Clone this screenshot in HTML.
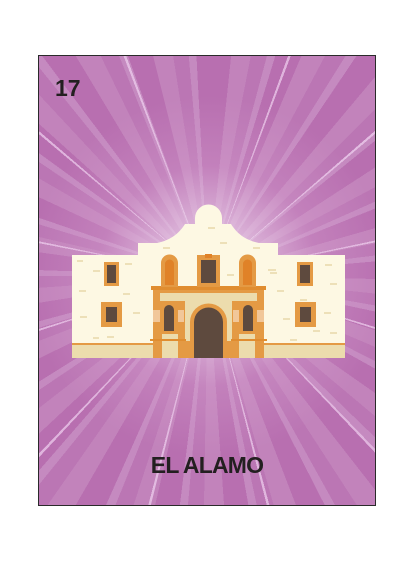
<!DOCTYPE html>
<html><head><style>
body{margin:0;width:414px;height:563px;background:#fff;position:relative;overflow:hidden;font-family:"Liberation Sans",sans-serif}
.card{position:absolute;left:38px;top:55px;width:336px;height:449px;border:1.5px solid #2a2a2a;overflow:hidden;
background:
radial-gradient(circle at 169px 220px, rgba(255,255,255,0.95) 0px, rgba(240,220,240,0.7) 40px, rgba(220,170,215,0.3) 110px, rgba(200,140,195,0) 180px),
repeating-conic-gradient(from 3deg at 169px 220px, rgba(255,255,255,0) 0deg 17deg, rgba(240,210,240,0.7) 17deg 17.6deg, rgba(255,255,255,0) 17.6deg 29deg),
repeating-conic-gradient(from 0deg at 169px 220px, #b86fb0 0deg 6deg, #c283bb 6deg 11deg, #bb76b4 11deg 15deg, #c58ac0 15deg 17deg);}
.t{position:absolute;font-weight:bold;color:#231f20}
</style></head><body>
<div class="card">
<div class="t" style="left:16px;top:19px;font-size:23px">17</div>
<div class="t" style="left:0;width:336px;text-align:center;top:396px;font-size:23px;letter-spacing:-0.8px">EL ALAMO</div>
</div>
<svg style="position:absolute;left:0;top:0" width="414" height="563">
<g>
<path d="M138 258 V243 H157 C172 240 180 232 185 224 H195 V218 A13 13 0 0 1 222 218 V224 H231 C236 232 244 240 259 243 H278 V258 Z" fill="#fdf8e3"/>
<rect x="72" y="255" width="273" height="103" fill="#fdf8e3"/>
<rect x="72" y="344" width="273" height="14" fill="#ecdcad"/>
<rect x="72" y="343" width="273" height="2" fill="#e49a44"/>
<g fill="#ede0b8">
<rect x="77" y="260" width="6" height="2"/><rect x="93" y="270" width="7" height="2"/><rect x="125" y="263" width="7" height="2"/>
<rect x="79" y="290" width="7" height="2"/><rect x="123" y="293" width="7" height="2"/><rect x="80" y="316" width="7" height="2"/>
<rect x="133" y="312" width="7" height="2"/><rect x="107" y="336" width="7" height="2"/><rect x="93" y="337" width="6" height="2"/>
<rect x="208" y="227" width="7" height="2"/><rect x="163" y="247" width="7" height="2"/><rect x="220" y="242" width="7" height="2"/>
<rect x="253" y="247" width="7" height="2"/><rect x="227" y="274" width="7" height="2"/><rect x="268" y="269" width="8" height="2"/>
<rect x="270" y="272" width="7" height="2"/><rect x="277" y="290" width="7" height="2"/><rect x="300" y="299" width="7" height="2"/>
<rect x="325" y="264" width="7" height="2"/><rect x="330" y="283" width="7" height="2"/><rect x="324" y="312" width="7" height="2"/>
<rect x="283" y="318" width="7" height="2"/><rect x="330" y="332" width="7" height="2"/><rect x="290" y="339" width="7" height="2"/><rect x="313" y="330" width="7" height="2"/>
</g>
<g fill="#e49a44"><rect x="104" y="262" width="15" height="24"/><rect x="101" y="302" width="21" height="25"/><rect x="297" y="262" width="16" height="24"/><rect x="295" y="302" width="21" height="25"/></g>
<g fill="#5e4a3e"><rect x="107" y="265" width="9" height="18"/><rect x="106" y="307" width="11" height="15"/><rect x="300" y="265" width="10" height="18"/><rect x="300" y="307" width="11" height="15"/></g>
<rect x="153" y="287" width="111" height="71" fill="#e49a44"/>
<rect x="151" y="286" width="115" height="4" fill="#e08d30"/>
<rect x="160" y="293" width="97" height="8" fill="#ecdcad"/>
<rect x="185" y="301" width="47" height="40" fill="#ecdcad"/>
<rect x="162" y="334" width="16" height="24" fill="#ecdcad"/>
<rect x="239" y="334" width="16" height="24" fill="#ecdcad"/>
<path d="M190 358 V322 A18 18 0 0 1 227 322 V358 Z" fill="#e49a44"/>
<path d="M194 358 V322 A14.5 14.5 0 0 1 223 322 V358 Z" fill="#5e4a3e"/>
<path d="M160 332 V310 A9 9 0 0 1 178 310 V332 Z" fill="#e49a44"/>
<path d="M164 331 V310 A5 5 0 0 1 174 310 V331 Z" fill="#5e4a3e"/>
<path d="M239 332 V310 A9 9 0 0 1 257 310 V332 Z" fill="#e49a44"/>
<path d="M243 331 V310 A5 5 0 0 1 253 310 V331 Z" fill="#5e4a3e"/>
<rect x="153" y="310" width="7" height="12" fill="#f1c79a"/><rect x="178" y="310" width="6" height="12" fill="#f1c79a"/>
<rect x="233" y="310" width="6" height="12" fill="#f1c79a"/><rect x="257" y="310" width="7" height="12" fill="#f1c79a"/>
<rect x="150" y="339" width="36" height="2" fill="#e08d30"/><rect x="231" y="339" width="36" height="2" fill="#e08d30"/>
<path d="M161 287 V263 A8.5 8.5 0 0 1 178 263 V287 Z" fill="#e49a44"/>
<path d="M165 285 V264 A4.5 4.5 0 0 1 174 264 V285 Z" fill="#e08228"/>
<path d="M239 287 V263 A8.5 8.5 0 0 1 256 263 V287 Z" fill="#e49a44"/>
<path d="M243 285 V264 A4.5 4.5 0 0 1 252 264 V285 Z" fill="#e08228"/>
<rect x="197" y="255" width="23" height="32" fill="#e49a44"/>
<rect x="201" y="260" width="15" height="23" fill="#5e4a3e"/>
<rect x="205" y="254" width="7" height="4" fill="#e08228"/>
</g>
</svg>
</body></html>
